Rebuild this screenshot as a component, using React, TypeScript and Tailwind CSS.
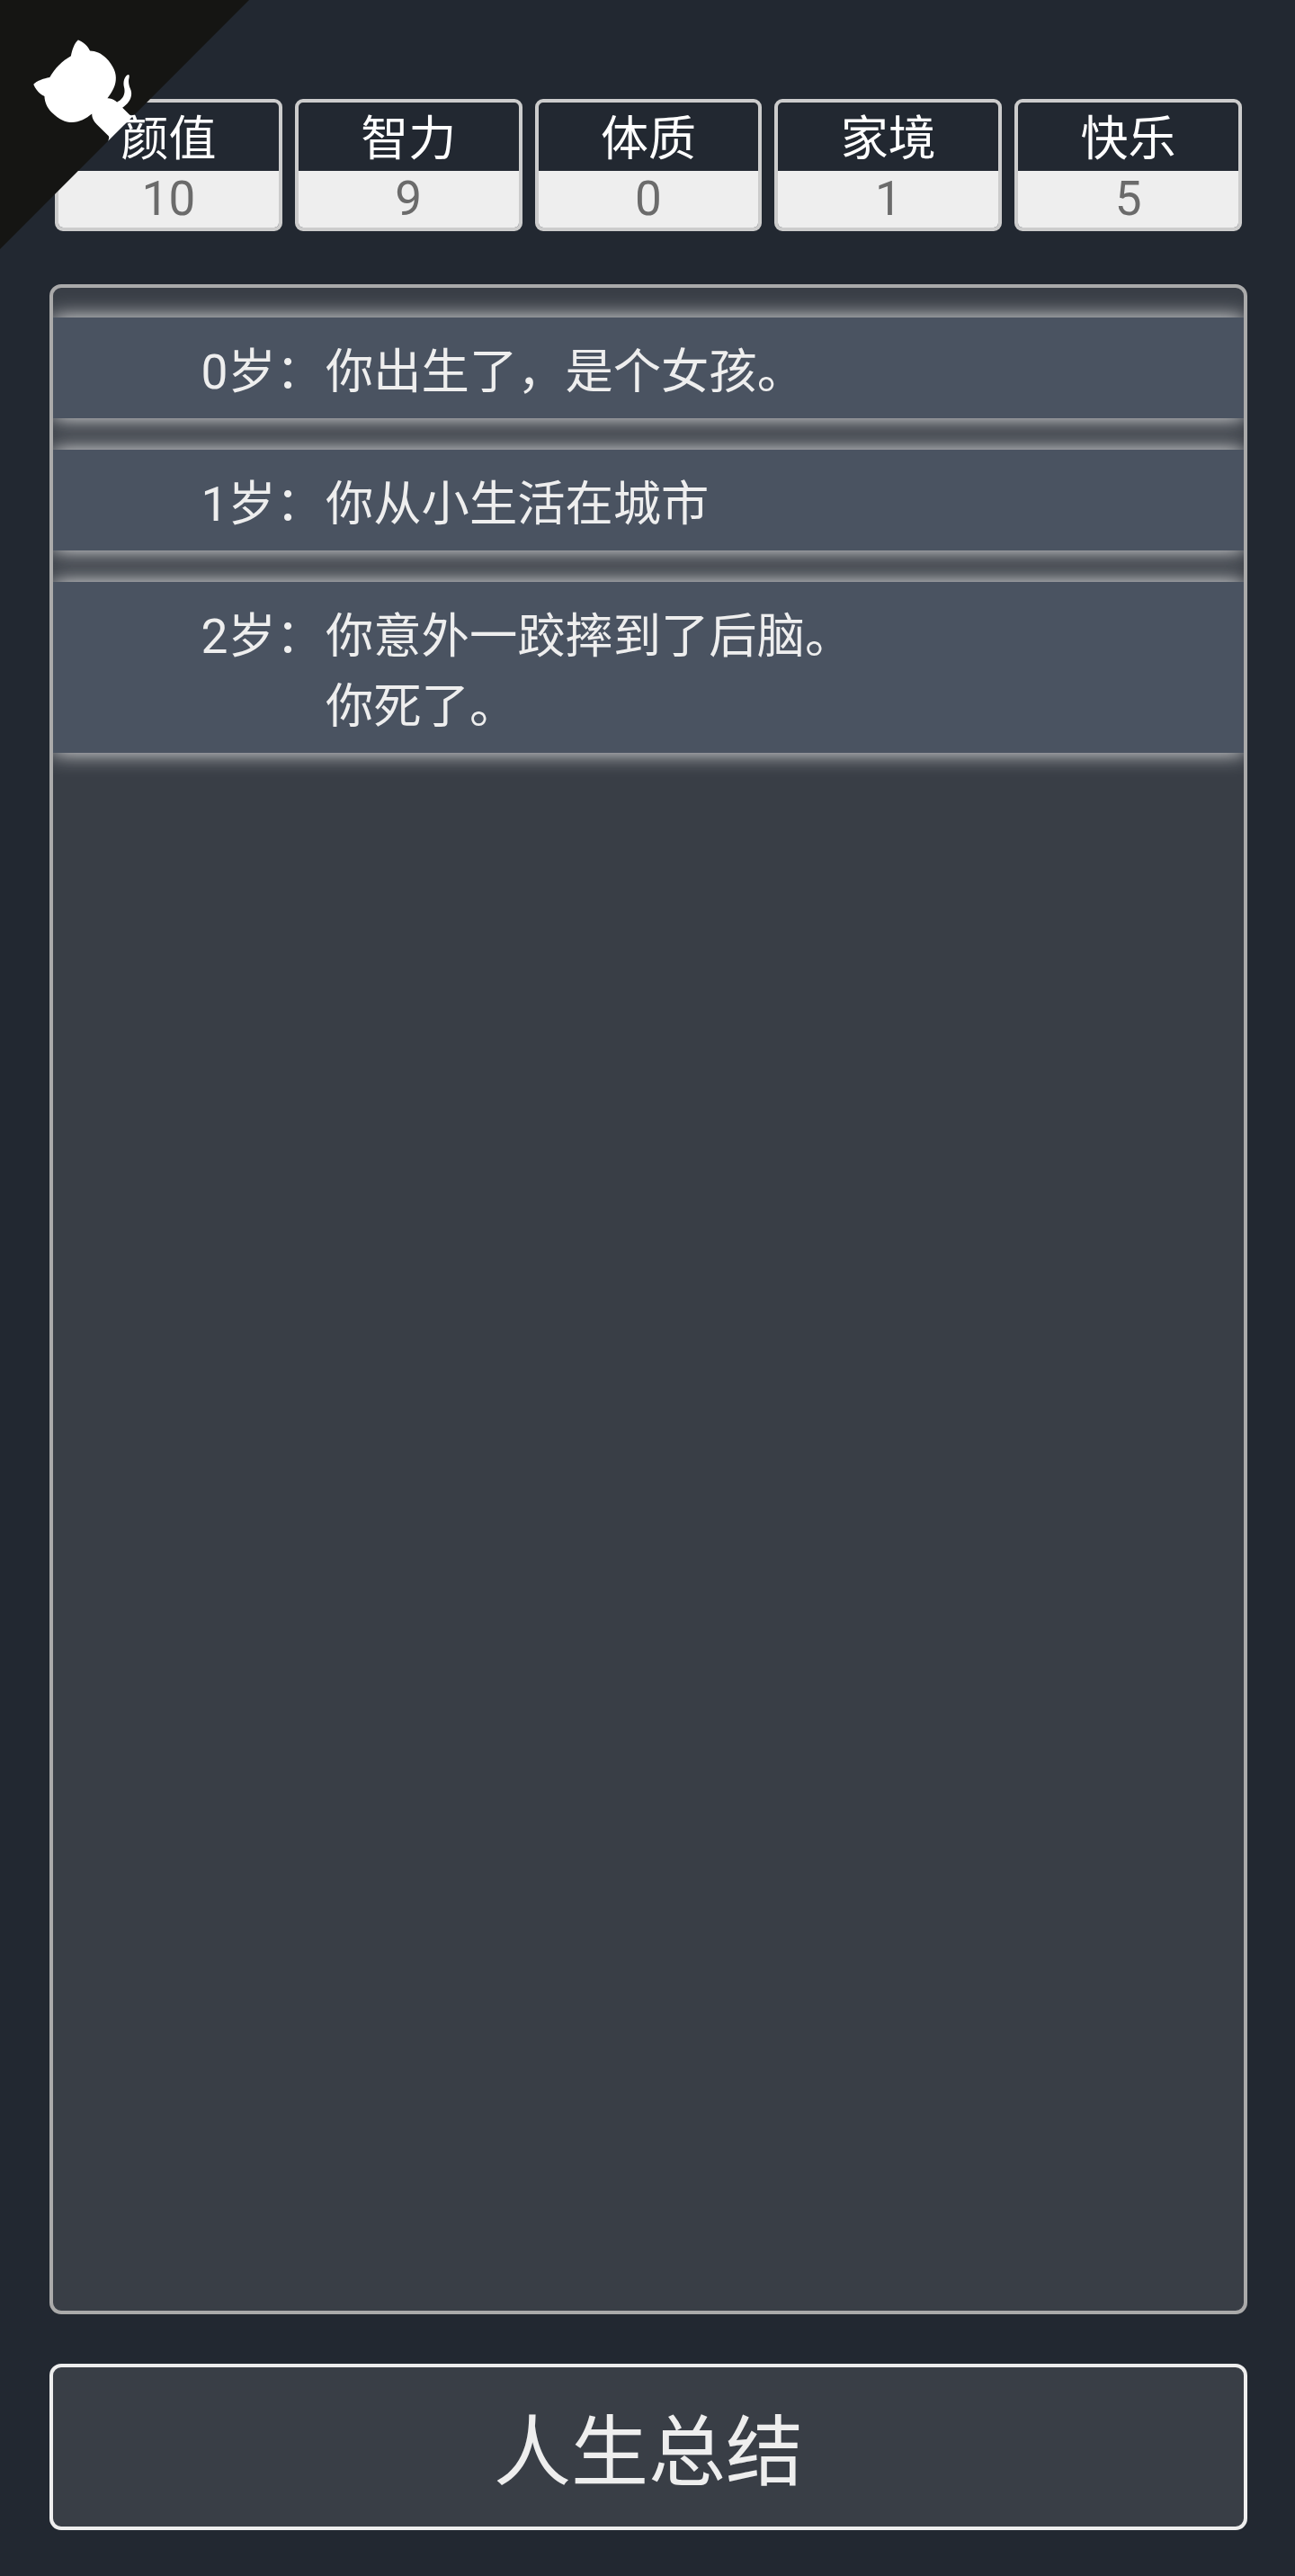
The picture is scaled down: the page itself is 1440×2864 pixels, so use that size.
const stats = [
  { label: "颜值", value: 10 },
  { label: "智力", value: 9 },
  { label: "体质", value: 0 },
  { label: "家境", value: 1 },
  { label: "快乐", value: 5 },
];

// full-width punctuation kept as escapes: U+FF0C comma, U+FF1A colon
const events = [
  { age: 0, lines: ["你出生了\uFF0C是个女孩。"] },
  { age: 1, lines: ["你从小生活在城市"] },
  { age: 2, lines: ["你意外一跤摔到了后脑。", "你死了。"] },
];

const GithubCorner = () => (
  <a href="#" className="absolute top-0 left-0">
    <svg width="277" height="277" viewBox="0 0 250 250" className="block -scale-x-100 fill-[#151513] text-white">
      <path d="M0,0 L115,115 L130,115 L142,142 L250,250 L250,0 Z" />
      <path
        d="M128.3,109.0 C113.8,99.7 119.0,89.6 119.0,89.6 C122.0,82.7 120.5,78.6 120.5,78.6 C119.2,72.0 123.4,76.3 123.4,76.3 C127.3,80.9 125.5,87.3 125.5,87.3 C122.9,97.6 130.6,101.9 134.4,103.2"
        fill="currentColor"
      />
      <path
        d="M115.0,115.0 C114.9,115.1 118.7,116.5 119.8,115.4 L133.7,101.6 C136.9,99.2 139.9,98.4 142.2,98.6 C133.8,88.0 127.5,74.4 143.8,58.0 C148.5,53.4 154.0,51.2 159.7,51.0 C160.3,49.4 163.2,43.6 171.4,40.1 C171.4,40.1 176.1,42.5 178.8,56.2 C183.1,58.6 187.2,61.8 190.9,65.4 C194.5,69.0 197.7,73.2 200.1,77.6 C213.8,80.2 216.3,84.9 216.3,84.9 C212.7,93.1 206.9,96.0 205.4,96.6 C205.1,102.4 203.0,107.8 198.3,112.5 C181.9,128.9 168.3,122.5 157.7,114.1 C157.9,116.9 156.7,120.9 152.7,124.9 L141.0,136.5 C139.8,137.7 141.6,141.9 141.8,141.8 Z"
        fill="currentColor"
      />
    </svg>
  </a>
);

export default function App() {
  return (
    <main className="relative flex h-[2864px] flex-col bg-[#222831] pt-[110px] pb-[51px] font-['Roboto','Noto_Sans_CJK_SC',sans-serif] text-[#eeeeee]">
      {/* stats */}
      <div className="flex gap-[14px] pr-[59px] pl-[61px]">
        {stats.map((s) => (
          <div key={s.label} className="flex-1 overflow-hidden rounded-[9px] border-4 border-[#cccccc] text-center">
            <div className="h-[76px] pt-[3px] text-[53px] leading-[76px] text-white">{s.label}</div>
            <div className="h-[63px] bg-[#eeeeee] text-[53px] leading-[63px] text-[#6b6b6b]">{s.value}</div>
          </div>
        ))}
      </div>

      {/* trajectory */}
      <div className="mt-[59px] mr-[53px] ml-[55px] flex-1 overflow-hidden rounded-[13px] border-4 border-[#aaaaaa] bg-[#393e46]">
        <ul className="flex flex-col gap-[35px] pt-[33px]">
          {events.map((e) => (
            <li key={e.age} className="flex bg-[#4a5361] pt-[22px] pb-[12px] text-[53.3px] leading-[78px] shadow-[0_0_22px_#eeeeee]">
              <span className="w-[303px] shrink-0 pr-[2px] text-right">{e.age}岁{"\uFF1A"}</span>
              <div>
                {e.lines.map((line) => (
                  <div key={line}>{line}</div>
                ))}
              </div>
            </li>
          ))}
        </ul>
      </div>

      {/* summary */}
      <button className="mt-[55px] mr-[53px] ml-[55px] h-[185px] rounded-[13px] border-4 border-[#eeeeee] bg-[#393e46] pt-[13px] text-[86px] text-[#eeeeee]">
        人生总结
      </button>

      <GithubCorner />
    </main>
  );
}
